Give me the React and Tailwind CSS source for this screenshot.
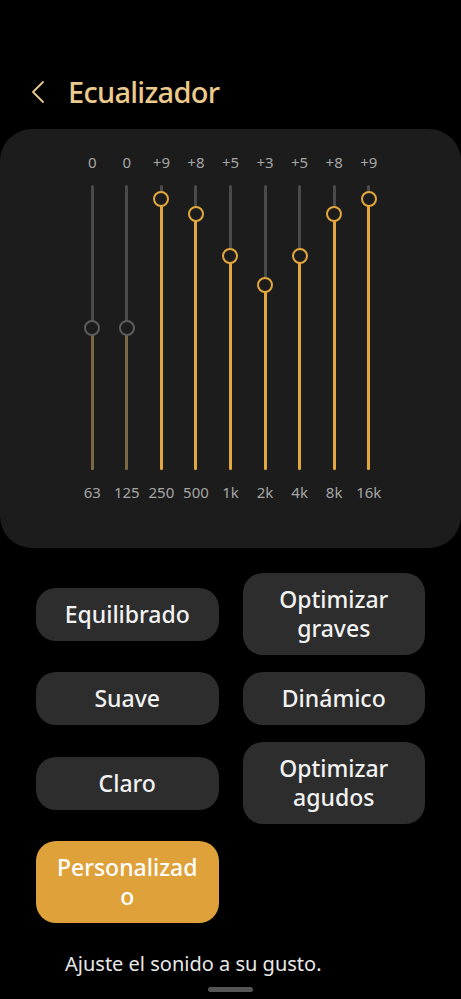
import React from "react";

const BANDS = [
  { label: "63", value: 0 },
  { label: "125", value: 0 },
  { label: "250", value: 9 },
  { label: "500", value: 8 },
  { label: "1k", value: 5 },
  { label: "2k", value: 3 },
  { label: "4k", value: 5 },
  { label: "8k", value: 8 },
  { label: "16k", value: 9 },
];

const PRESETS = [
  ["Equilibrado"],
  ["Optimizar", "graves"],
  ["Suave"],
  ["Dinámico"],
  ["Claro"],
  ["Optimizar", "agudos"],
  ["Personalizad", "o"],
];

const TRACK_H = 285;
const STEP = 14.25; // px per dB, range -10..+10

function Slider({ value }) {
  const knobY = TRACK_H / 2 - value * STEP;
  const active = value !== 0;
  return (
    <div className="relative flex justify-center h-[285px]">
      <div className="w-[3px] h-full rounded-full bg-[#4b4b4b]" />
      {/* filled part below the knob */}
      <div
        className={
          "absolute bottom-0 w-[3px] rounded-full " +
          (active ? "bg-[#e2a73d]" : "bg-[#7a6843]")
        }
        style={{ height: TRACK_H - knobY }}
      />
      <div
        className={
          "absolute w-[16px] h-[16px] rounded-full border-[2.5px] bg-[#1c1c1c] " +
          (active ? "border-[#e2a73d]" : "border-[#5c5c5c]")
        }
        style={{ top: knobY - 8 }}
      />
    </div>
  );
}

export default function App() {
  return (
    <div
      className="min-h-screen bg-black text-white flex flex-col"
      style={{ fontFamily: '"Noto Sans", "Open Sans", sans-serif' }}
    >
      {/* Header */}
      <div className="flex items-center h-[56px] mt-[64px] pl-[30px]">
        <svg width="16" height="24" viewBox="0 0 16 24" fill="none">
          <polyline
            points="13,2 3,12 13,22"
            stroke="#e9c98c"
            strokeWidth="1.8"
            strokeLinecap="round"
            strokeLinejoin="round"
          />
        </svg>
        <h1 className="ml-[22px] text-[29px] text-[#ecca8c] font-medium tracking-tight">
          Ecualizador
        </h1>
      </div>

      {/* Equalizer card */}
      <div className="mt-[9px] bg-[#1c1c1c] rounded-[32px] pt-[23px] pb-[46px]">
        <div className="mx-auto w-[311px] grid grid-cols-9">
          {BANDS.map((b, i) => (
            <div key={i} className="flex flex-col items-center">
              <span className="text-[15px] leading-[20px] text-[#a6a6a6]">
                {b.value > 0 ? `+${b.value}` : b.value}
              </span>
              <div className="mt-[13px] w-full">
                <Slider value={b.value} />
              </div>
              <span className="mt-[12px] text-[15px] leading-[20px] text-[#a6a6a6]">
                {b.label}
              </span>
            </div>
          ))}
        </div>
      </div>

      {/* Presets */}
      <div className="mt-[25px] px-[36px] grid grid-cols-2 gap-x-6 gap-y-[17px] items-center">
        {PRESETS.map((lines, i) => {
          const selected = i === PRESETS.length - 1;
          return (
            <button
              key={i}
              className={
                "rounded-[20px] py-[12px] text-[23px] leading-[29px] font-medium text-center " +
                (selected ? "bg-[#dfa23a] text-white" : "bg-[#2d2d2d] text-[#f2f2f2]")
              }
            >
              {lines.map((l, j) => (
                <span key={j} className="block">
                  {l}
                </span>
              ))}
            </button>
          );
        })}
      </div>

      <p className="mt-[27px] pl-[65px] text-[20px] leading-[28px] text-[#e8e8e8]">
        Ajuste el sonido a su gusto.
      </p>

      <div className="mx-auto mt-[9px] w-[45px] h-[5px] rounded-full bg-[#555555]" />
    </div>
  );
}
